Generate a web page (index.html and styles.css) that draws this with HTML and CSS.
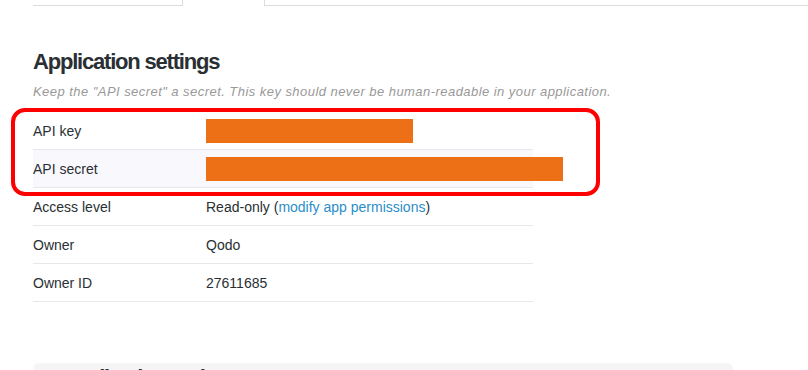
FILE: index.html
```html
<!DOCTYPE html>
<html lang="en">
<head>
  <meta charset="UTF-8" />
  <meta name="viewport" content="width=device-width, initial-scale=1" />
  <link rel="stylesheet" href="styles.css">
</head>
<body>

  <div class="tabs">
    <div class="tab"></div>
    <div class="tab active"></div>
    <div class="tab-fill"></div>
  </div>

  <div class="page">
    <h2 class="title">Application settings</h2>
    <p class="hint">Keep the "API secret" a secret. This key should never be human-readable in your application.</p>

    <div class="settings">
      <!-- highlight around the two secret rows -->
      <div class="highlight"></div>
      <div class="row">
        <span class="label">API key</span>
        <span class="value"><span class="redacted" style="width: 207px"></span></span>
      </div>
      <div class="row alt">
        <span class="label">API secret</span>
        <span class="value"><span class="redacted" style="width: 357px"></span></span>
      </div>
      <div class="row">
        <span class="label">Access level</span>
        <span class="value">Read-only (<a href="#">modify app permissions</a>)</span>
      </div>
      <div class="row">
        <span class="label">Owner</span>
        <span class="value">Qodo</span>
      </div>
      <div class="row">
        <span class="label">Owner ID</span>
        <span class="value">27611685</span>
      </div>
    </div>

    <div class="panel">
      <h3 class="panel-title">Application actions</h3>
    </div>
  </div>

</body>
</html>
```

FILE: styles.css
```css
html, body {
  margin: 0;
  padding: 0;
  height: 100%;
  overflow: hidden;
  background: #fff;
  font-family: "Liberation Sans", Arial, sans-serif;
  color: #292f33;
}

.tabs {
  display: flex;
  height: 6px;
  padding-left: 33px;
}

.tab {
  width: 149px;
  border-right: 1px solid #dcdcdc;
  border-bottom: 1px solid #dcdcdc;
}

.tab.active {
  width: 81px;
  border-bottom: none;
}

.tab-fill {
  flex: 1;
  border-bottom: 1px solid #dcdcdc;
}

.page {
  padding-left: 33px;
}

.title {
  margin: 0;
  padding-top: 41px;
  font-size: 22px;
  line-height: 30px;
  font-weight: bold;
  letter-spacing: -1.2px;
  color: #292f33;
}

.hint {
  margin: 7px 0 0;
  font-size: 13px;
  line-height: 16px;
  font-style: italic;
  letter-spacing: 0.45px;
  color: #999;
}

.settings {
  position: relative;
  width: 500px;
  margin-top: 12px;
}

.highlight {
  position: absolute;
  left: -22px;
  top: -4px;
  width: 581px;
  height: 80px;
  border: 4px solid #ff0000;
  border-radius: 14px;
}

.row {
  display: flex;
  align-items: center;
  height: 37px;
  border-bottom: 1px solid #e8e8e8;
  font-size: 14px;
  color: #292f33;
}

.row.alt {
  background: #f9f9fd;
}

.label {
  flex: none;
  width: 173px;
}

.value {
  flex: 1;
  white-space: nowrap;
}

.value a {
  color: #2b8ec9;
  text-decoration: none;
}

.redacted {
  display: inline-block;
  height: 24px;
  vertical-align: middle;
  background: #ee7016;
}

.panel {
  width: 700px;
  height: 40px;
  margin-top: 61px;
  background: #f5f5f5;
  border-radius: 6px;
  overflow: hidden;
}

.panel-title {
  margin: 0;
  padding: 0 0 0 27px;
  font-size: 22px;
  line-height: 29px;
  font-weight: bold;
  letter-spacing: -1.2px;
  color: #292f33;
}
```
